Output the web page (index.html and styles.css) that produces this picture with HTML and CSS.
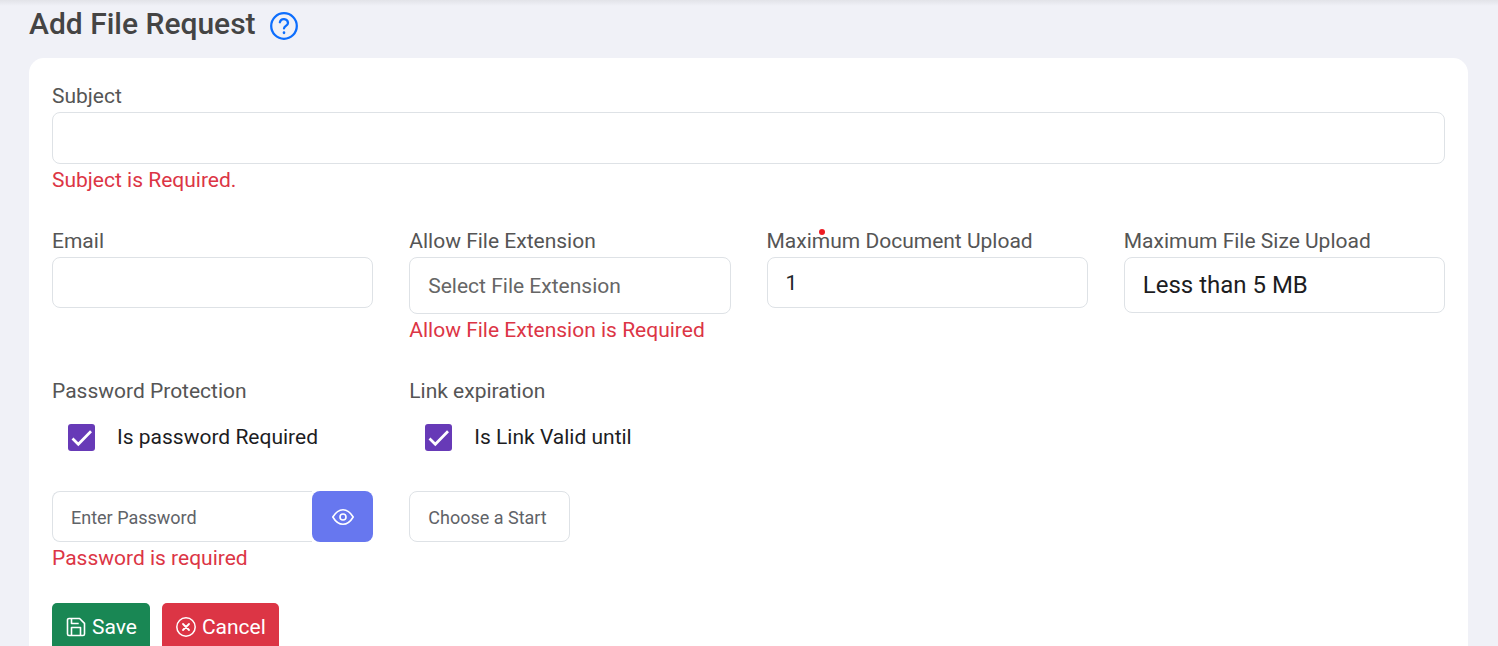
FILE: index.html
```html
<!DOCTYPE html>
<html lang="en">
<head>
<meta charset="utf-8">
<title>Add File Request</title>
<link rel="stylesheet" href="styles.css">
</head>
<body>
<main class="page">
  <header class="page-header">
    <h1 class="page-title">Add File Request</h1>
    <a class="help" href="#help" aria-label="Help">
      <svg viewBox="0 0 24 24" width="32" height="32" fill="none" stroke="currentColor" stroke-width="1.7" stroke-linecap="round" stroke-linejoin="round" aria-hidden="true"><circle cx="12" cy="12" r="9.6"/><path d="M8.900 9.200a3.100 3.100 0 0 1 6.100.5c0 1.900-3 2.500-3 4.100"/><path d="M12 17v.1" stroke-width="2"/></svg>
    </a>
  </header>
  <form class="card">
    <div class="field">
      <label class="label" for="subject">Subject</label>
      <input class="control control-wide" id="subject" type="text">
      <p class="error">Subject is Required.</p>
    </div>
    <div class="grid">
      <div class="field">
        <label class="label" for="email">Email</label>
        <input class="control" id="email" type="email">
      </div>
      <div class="field">
        <label class="label" for="extension">Allow File Extension</label>
        <select class="control control-select placeholder" id="extension"><option>Select File Extension</option></select>
        <p class="error">Allow File Extension is Required</p>
      </div>
      <div class="field marked">
        <label class="label" for="max-docs">Maximum Document Upload</label>
        <span class="marker"></span>
        <input class="control" id="max-docs" type="text" inputmode="numeric" value="1">
      </div>
      <div class="field">
        <label class="label" for="max-size">Maximum File Size Upload</label>
        <select class="control control-select control-large" id="max-size"><option>Less than 5 MB</option></select>
      </div>
    </div>
    <div class="grid">
      <div class="field">
        <span class="label">Password Protection</span>
        <label class="check"><input class="check-box" type="checkbox" checked>Is password Required</label>
        <div class="password">
          <input class="control password-input" type="password" placeholder="Enter Password" aria-label="Password">
          <button class="reveal" type="button" aria-label="Show password">
            <svg viewBox="0 0 22 22" width="22" height="22" fill="none" stroke="currentColor" stroke-width="1.600" stroke-linejoin="round" aria-hidden="true"><path d="M.8 11C3.500 6.500 6.800 3.700 11 3.700S18.500 6.500 21.200 11C18.500 15.500 15.200 18.300 11 18.300S3.500 15.500.8 11Z"/><circle cx="11" cy="11" r="3"/></svg>
          </button>
        </div>
        <p class="error">Password is required</p>
      </div>
      <div class="field">
        <span class="label">Link expiration</span>
        <label class="check"><input class="check-box" type="checkbox" checked>Is Link Valid until</label>
        <input class="control date" type="text" placeholder="Choose a Start" aria-label="Start date">
      </div>
    </div>
    <div class="actions">
      <button class="button save" type="submit">
        <svg viewBox="0 0 20 20" width="20" height="20" fill="none" stroke="currentColor" stroke-width="1.600" stroke-linejoin="round" aria-hidden="true"><path d="M3 1.500h10.600l4.900 4.900V17a1.500 1.500 0 0 1-1.500 1.500H3A1.500 1.500 0 0 1 1.500 17V3A1.500 1.500 0 0 1 3 1.500Z"/><path d="M5.500 1.500v5h7.200M5.500 18.500v-8h9v8"/></svg>
        Save
      </button>
      <button class="button cancel" type="button">
        <svg viewBox="0 0 20 20" width="20" height="20" fill="none" stroke="currentColor" stroke-width="1.500" stroke-linecap="round" aria-hidden="true"><circle cx="10" cy="10" r="9.200"/><path d="m7 7 6 6m0-6-6 6" stroke-width="1.800"/></svg>
        Cancel
      </button>
    </div>
  </form>
</main>
</body>
</html>
```
FILE: styles.css
```css
* { box-sizing: border-box; }
body {
  margin: 0;
  height: 100vh;
  overflow: hidden;
  background: #f0f1f7;
  color: #555;
  font-family: Roboto, sans-serif;
  font-size: 21px;
}
.page {
  min-height: 100vh;
  padding: 0 30px 0 29px;
  background: linear-gradient(#e2e3e8, #f0f1f7 6px);
}
.page-header { display: flex; gap: 12px; height: 58px; }
.page-title {
  margin: 0;
  color: #444;
  font-size: 30px;
  font-weight: 500;
  line-height: 48px;
}
.help { height: 32px; margin-top: 10px; color: #0d6efd; }
.help svg, .button svg, .reveal svg { display: block; }
.card {
  display: flex;
  flex-direction: column;
  gap: 28px;
  padding: 22px 23px;
  border-radius: 15px;
  background: #fff;
}
.grid { display: grid; grid-template-columns: repeat(4, 1fr); gap: 36px; }
.field { display: flex; flex-direction: column; min-width: 0; }
.label { line-height: 32px; }
.error { margin: 0; color: #dc3545; line-height: 33px; }
.control {
  width: 100%;
  height: 51px;
  padding: 0 18px;
  border: 1px solid #dee2e6;
  border-radius: 8px;
  outline: 0;
  background: #fff;
  color: #212529;
  font: inherit;
}
.control::placeholder { color: #5f6368; font-size: 18px; opacity: 1; }
.control-wide { height: 52px; }
.control-select { height: 57px; appearance: none; }
.placeholder { color: #666; }
.control-large { height: 56px; color: #1d1d1f; font-size: 24px; }
.marked { position: relative; }
.marker {
  position: absolute;
  top: 4px;
  left: 52px;
  width: 6px;
  height: 6px;
  border-radius: 50%;
  background: #ed1c24;
}
.check {
  display: flex;
  align-items: center;
  gap: 22px;
  height: 60px;
  padding-left: 16px;
  margin-bottom: 24px;
  color: #1d1d1f;
}
.check-box {
  flex: none;
  width: 27px;
  height: 27px;
  margin: 0;
  border-radius: 3px;
  appearance: none;
  background: #673ab7 url("data:image/svg+xml,%3Csvg xmlns='http://www.w3.org/2000/svg' viewBox='0 0 27 27'%3E%3Cpath d='M4.500 14.500 10.300 20.300 23 7.200' fill='none' stroke='white' stroke-width='2.700'/%3E%3C/svg%3E") center / 27px;
}
.password { display: flex; }
.password-input { flex: 1; min-width: 0; border-right: 0; border-radius: 8px 0 0 8px; }
.reveal {
  display: grid;
  place-items: center;
  width: 61px;
  border: 0;
  border-radius: 8px;
  background: #6777ef;
  color: #fff;
}
.date { width: 50%; }
.actions { display: flex; gap: 12px; }
.button {
  display: flex;
  align-items: center;
  gap: 6px;
  height: 48px;
  padding: 0 13px 0 14px;
  border: 0;
  border-radius: 5px;
  color: #fff;
  font: inherit;
}
.save { background: #198754; }
.cancel { background: #dc3545; }
```
